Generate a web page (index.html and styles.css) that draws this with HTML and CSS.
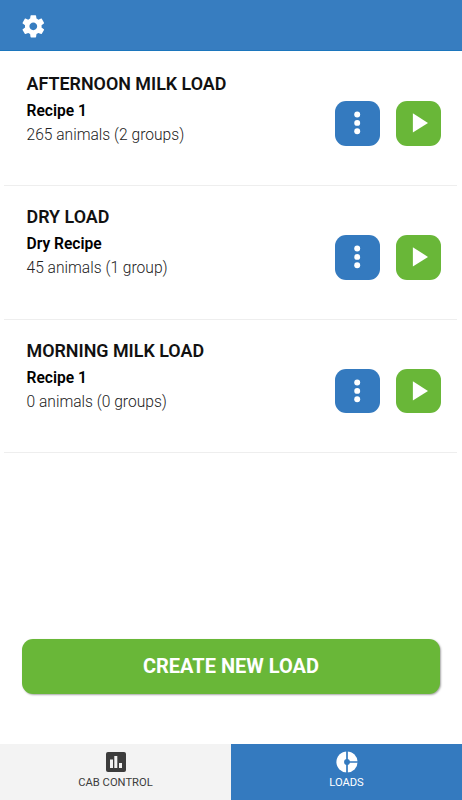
FILE: index.html
```html
<!DOCTYPE html>
<html lang="en">
<head>
<meta charset="utf-8">
<title>Loads</title>
<link rel="stylesheet" href="styles.css">
</head>
<body>
<svg class="sprite" width="0" height="0">
  <symbol id="more" viewBox="0 0 45 45"><circle cx="22.4" cy="13.7" r="3"/><circle cx="22.4" cy="22.1" r="3"/><circle cx="22.4" cy="30.5" r="3"/></symbol>
  <symbol id="play" viewBox="0 0 45 45"><path d="M17 12.3v19.6l15.3-9.8z"/></symbol>
</svg>
<header class="topbar">
  <svg class="gear" viewBox="0 0 24 24"><path d="M19.43 12.98c.04-.32.07-.64.07-.98s-.03-.66-.07-.98l2.11-1.65c.19-.15.24-.42.12-.64l-2-3.46c-.12-.22-.39-.3-.61-.22l-2.49 1c-.52-.4-1.08-.73-1.69-.98l-.38-2.65C14.46 2.18 14.25 2 14 2h-4c-.25 0-.46.18-.49.42l-.38 2.65c-.61.25-1.17.59-1.69.98l-2.49-1c-.23-.09-.49 0-.61.22l-2 3.46c-.13.22-.07.49.12.64l2.11 1.65c-.04.32-.07.65-.07.98s.03.66.07.98l-2.11 1.65c-.19.15-.24.42-.12.64l2 3.46c.12.22.39.3.61.22l2.49-1c.52.4 1.08.73 1.69.98l.38 2.65c.03.24.24.42.49.42h4c.25 0 .46-.18.49-.42l.38-2.65c.61-.25 1.17-.59 1.69-.98l2.49 1c.23.09.49 0 .61-.22l2-3.46c.12-.22.07-.49-.12-.64l-2.11-1.65zM12 15.5c-1.93 0-3.5-1.57-3.5-3.5s1.57-3.5 3.5-3.5 3.5 1.57 3.5 3.5-1.57 3.5-3.5 3.5z"/></svg>
</header>
<main class="loads">
  <section class="load">
    <div class="info">
      <h2>AFTERNOON MILK LOAD</h2>
      <h3>Recipe 1</h3>
      <p>265 animals (2 groups)</p>
    </div>
    <button class="action blue" aria-label="Options"><svg><use href="#more"/></svg></button>
    <button class="action green" aria-label="Start"><svg><use href="#play"/></svg></button>
  </section>
  <section class="load">
    <div class="info">
      <h2>DRY LOAD</h2>
      <h3>Dry Recipe</h3>
      <p>45 animals (1 group)</p>
    </div>
    <button class="action blue" aria-label="Options"><svg><use href="#more"/></svg></button>
    <button class="action green" aria-label="Start"><svg><use href="#play"/></svg></button>
  </section>
  <section class="load">
    <div class="info">
      <h2>MORNING MILK LOAD</h2>
      <h3>Recipe 1</h3>
      <p>0 animals (0 groups)</p>
    </div>
    <button class="action blue" aria-label="Options"><svg><use href="#more"/></svg></button>
    <button class="action green" aria-label="Start"><svg><use href="#play"/></svg></button>
  </section>
</main>
<button class="create">CREATE NEW LOAD</button>
<nav class="tabs">
  <a class="tab">
    <svg viewBox="0 0 26 26"><rect x="3" y="3" width="20" height="20" rx="2"/><path class="bars" d="M7 10.500h3v8.500H7zM11.300 7h3v12h-3zM16 14h3v5h-3z"/></svg>
    <span>CAB CONTROL</span>
  </a>
  <a class="tab active">
    <svg viewBox="0 0 26 26"><circle cx="13" cy="13" r="10.600"/><path class="gaps" d="M13 2v22M13 13h11"/><circle class="hub" cx="13" cy="13" r="2.900"/></svg>
    <span>LOADS</span>
  </a>
</nav>
</body>
</html>
```
FILE: styles.css
```css
* { box-sizing: border-box; margin: 0; }
body {
  height: 800px;
  display: flex;
  flex-direction: column;
  background: #fff;
  color: #111;
  font-family: Roboto, sans-serif;
  overflow: hidden;
}
.sprite { display: none; }
svg { display: block; fill: currentColor; }
.topbar {
  height: 51px;
  flex: none;
  padding: 12.5px 20px;
  background: #377dc0;
  border-bottom: 1px solid #1c76bd;
  color: #fff;
}
.gear { width: 26.6px; height: 26.6px; }
.loads { padding: 1.300px 5px 0 4px; }
.load {
  height: 133.67px;
  display: flex;
  align-items: flex-start;
  padding: 19.500px 16px 0 22.500px;
  border-bottom: 1px solid #eee;
}
.info { flex: 1; white-space: nowrap; }
h2 { font-size: 17.9px; font-weight: 600; line-height: 24px; }
h3 { font-size: 15.6px; font-weight: 600; line-height: 24px; padding-top: 2.900px; color: #000; }
p { font-size: 15.6px; font-weight: 300; line-height: 24px; color: #222; }
.action {
  width: 44.600px;
  height: 44.600px;
  margin-top: 29.500px;
  margin-left: 16.600px;
  padding: 0;
  border: 0;
  border-radius: 11px;
  color: #fff;
}
.action svg { width: 100%; height: 100%; }
.blue { background: #347abf; }
.green { background: #69b738; }
.create {
  height: 55px;
  flex: none;
  margin: auto 22px 50px;
  padding: 0 0 1px;
  border: 0;
  border-radius: 11px;
  background: #69b738;
  box-shadow: 1px 1px 2px rgba(0, 0, 0, .35);
  color: #fff;
  font: 700 20px/52px Roboto, sans-serif;
}
.tabs { display: flex; height: 56px; flex: none; }
.tab {
  flex: 1;
  display: flex;
  flex-direction: column;
  align-items: center;
  padding-top: 5px;
  background: #f3f3f3;
  color: #3c3c3c;
  font-size: 11.2px;
  line-height: 16px;
}
.tab svg { width: 26px; height: 26px; }
.bars { fill: #f3f3f3; }
.gaps { stroke: #347abf; stroke-width: 1.7; }
.hub { fill: #347abf; }
.tab.active { background: #347abf; color: #fff; }
```
